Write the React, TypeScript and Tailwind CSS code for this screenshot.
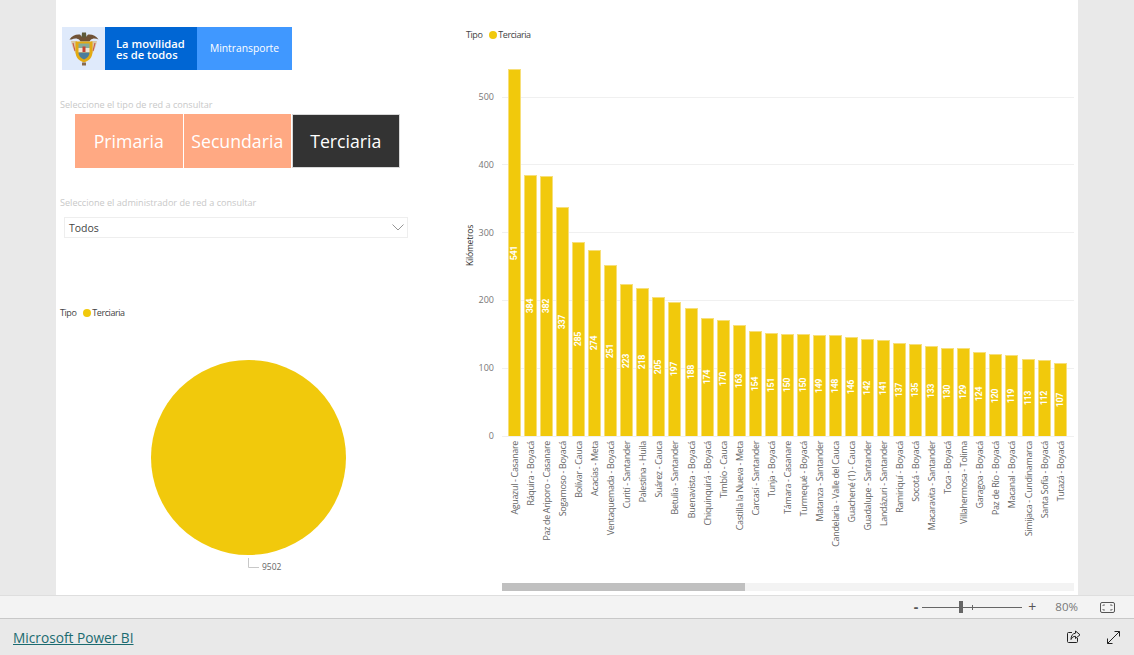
import React from "react";

const data: [string, number][] = [
  ["Aguazul - Casanare", 541],
  ["Ráquira - Boyacá", 384],
  ["Paz de Ariporo - Casanare", 382],
  ["Sogamoso - Boyacá", 337],
  ["Bolívar - Cauca", 285],
  ["Acacías - Meta", 274],
  ["Ventaquemada - Boyacá", 251],
  ["Curití - Santander", 223],
  ["Palestina - Huila", 218],
  ["Suárez - Cauca", 205],
  ["Betulia - Santander", 197],
  ["Buenavista - Boyacá", 188],
  ["Chiquinquirá - Boyacá", 174],
  ["Timbío - Cauca", 170],
  ["Castilla la Nueva - Meta", 163],
  ["Carcasí - Santander", 154],
  ["Tunja - Boyacá", 151],
  ["Támara - Casanare", 150],
  ["Turmequé - Boyacá", 150],
  ["Matanza - Santander", 149],
  ["Candelaria - Valle del Cauca", 148],
  ["Guachené (1) - Cauca", 146],
  ["Guadalupe - Santander", 142],
  ["Landázuri - Santander", 141],
  ["Ramiriquí - Boyacá", 137],
  ["Socotá - Boyacá", 135],
  ["Macaravita - Santander", 133],
  ["Toca - Boyacá", 130],
  ["Villahermosa - Tolima", 129],
  ["Garagoa - Boyacá", 124],
  ["Paz de Río - Boyacá", 120],
  ["Macanal - Boyacá", 119],
  ["Simijaca - Cundinamarca", 113],
  ["Santa Sofía - Boyacá", 112],
  ["Tutazá - Boyacá", 107],
];

const ticks = [500, 400, 300, 200, 100, 0];
const TICK_PX = 0.678;
const BAR_PX = 0.68;

function Escudo() {
  return (
    <svg viewBox="0 0 30 34" className="h-[34px] w-[30px]" aria-hidden="true">
      {/* flags behind the shield */}
      <path d="M2 9c1 4 2 9 5 13l2-2-1-11Z" fill="#d9c7a4" />
      <path d="M28 9c-1 4-2 9-5 13l-2-2 1-11Z" fill="#d9c7a4" />
      <path d="M4 11l2 8M26 11l-2 8" stroke="#c8504a" strokeWidth="1" />
      {/* condor */}
      <path d="M0.500 7.500C3 3.500 7 2 11 2.500l2 2.500h4l2-2.500c4-.5 8 1 10.500 5-3-1.500-6-1.500-8 .5l-1 1.500h-9l-1-1.500c-2-2-5-2-8-.5Z" fill="#6f5236" />
      <path d="M13 .5h4l.5 5h-5Z" fill="#5d5a3a" />
      {/* shield */}
      <path d="M6.500 9.500h17v10c0 6.500-4 9.500-8.500 11-4.500-1.500-8.500-4.500-8.500-11Z" fill="#e3aa12" />
      <path d="M9.500 11.500h11V16h-11Z" fill="#86ab9c" />
      <path d="M9.500 16h11v4.500h-11Z" fill="#ece3d6" />
      <path d="M13.500 14.500h3V20h-3Z" fill="#c8412f" />
      <path d="M9.500 20.500h11c0 3.500-2 5.500-5.500 7-3.500-1.500-5.500-3.500-5.500-7Z" fill="#4c7d9c" />
      <path d="M13 30.500h4V33.500h-4Z" fill="#8a6a4a" />
    </svg>
  );
}

function Legend() {
  return (
    <div className="flex h-[12px] items-center font-['Open_Sans',sans-serif] text-[9px] tracking-[-0.45px] text-[#444]">
      <span>Tipo</span>
      <span className="ml-[7px] h-[8px] w-[8px] rounded-full bg-[#f1c90c]" />
      <span className="ml-px">Terciaria</span>
    </div>
  );
}

function SlicerButton({ label, active }: { label: string; active?: boolean }) {
  return (
    <div
      className={`flex h-[54px] w-[107.5px] items-center justify-center border pt-px text-[17.7px] text-white ${
        active ? "border-[#d8d8d8] bg-[#333333]" : "border-transparent bg-[#ffa983]"
      }`}
    >
      {label}
    </div>
  );
}

function LeftColumn() {
  return (
    <div className="flex w-[410px] shrink-0 flex-col pt-[27px] font-['Open_Sans',sans-serif]">
      <div className="ml-[6px] flex h-[43px] w-[230px]">
        <div className="flex w-[43px] items-center justify-center bg-[#dfeafb]">
          <Escudo />
        </div>
        <div className="flex w-[92px] flex-col justify-center whitespace-nowrap bg-[#0066d4] pl-[11px] text-[11.2px] font-semibold leading-[11px] text-white">
          <span>La movilidad</span>
          <span>es de todos</span>
        </div>
        <div className="flex flex-1 items-center justify-center bg-[#4098ff] text-[10.3px] font-medium text-white">
          Mintransporte
        </div>
      </div>

      <p className="ml-[4px] mt-[28px] h-[14px] text-[9.1px] leading-[14px] text-[#c8c8c8]">
        Seleccione el tipo de red a consultar
      </p>
      <div className="ml-[19px] mt-[2px] flex gap-px">
        <SlicerButton label="Primaria" />
        <SlicerButton label="Secundaria" />
        <SlicerButton label="Terciaria" active />
      </div>

      <p className="ml-[4px] mt-[28px] h-[14px] text-[9.1px] leading-[14px] text-[#c8c8c8]">
        Seleccione el administrador de red a consultar
      </p>
      <div className="ml-[8px] mt-[7px] flex h-[21px] w-[344px] items-center justify-between border border-[#eeeeee] pl-[4px] pr-[3px] text-[10.5px] text-[#444]">
        <span className="pt-[3px]">Todos</span>
        <svg viewBox="0 0 12 7" className="h-[7px] w-[12px]" fill="none" stroke="#8a8a8a" strokeWidth="0.9" aria-hidden="true">
          <path d="M0.5 0.5 6 6l5.5-5.5" />
        </svg>
      </div>

      <div className="ml-[4px] mt-[69px]">
        <Legend />
      </div>

      <div className="relative ml-[95px] mt-[41px] h-[195px] w-[195px] rounded-full bg-[#f1c90c]">
        <svg viewBox="0 0 12 10" className="absolute left-[97px] top-[198px] h-[10px] w-[12px]" fill="none" stroke="#c8c8c8" aria-hidden="true">
          <path d="M0.5 0v9.5H11" />
        </svg>
        <span className="absolute left-[111px] top-[201px] text-[8.5px] leading-[12px] text-[#666]">9502</span>
      </div>
    </div>
  );
}

function BarChart() {
  return (
    <div className="flex min-w-0 flex-1 flex-col pt-[29px]">
      <Legend />
      <div className="mt-[28px] flex">
        <div className="flex h-[367px] w-[8px] items-center justify-center pb-[15px]">
          <span className="rotate-180 whitespace-nowrap font-['Open_Sans',sans-serif] text-[8.500px] tracking-[-0.2px] text-[#333] [writing-mode:vertical-rl]">
            Kilómetros
          </span>
        </div>
        <div className="relative h-[367px] w-[600px]">
          {ticks.map((tick) => (
            <div key={tick} className="absolute left-0 flex w-full items-center" style={{ bottom: tick * TICK_PX - 6 }}>
              <span className="w-[20px] text-right font-['Open_Sans',sans-serif] text-[9px] leading-[12px] text-[#777]">{tick}</span>
              <span className="ml-[8px] h-px flex-1 bg-[#f0f0f0]" />
            </div>
          ))}
          <div className="absolute bottom-0 left-[34px] flex items-end gap-[3.06px]">
            {data.map(([name, value]) => (
              <div
                key={name}
                className="flex w-[13px] items-center justify-center border border-b-0 border-[#f7df7a] bg-[#f1c90c]"
                style={{ height: Math.min(value * BAR_PX, 367) }}
              >
                <span className="rotate-180 font-['Roboto',sans-serif] text-[9px] leading-none font-bold tracking-[-0.4px] text-white [writing-mode:vertical-rl]">
                  {value}
                </span>
              </div>
            ))}
          </div>
        </div>
      </div>
      <div className="ml-[42px] mt-[5px] flex h-[125px] items-start gap-[3.06px]">
        {data.map(([name]) => (
          <div key={name} className="flex w-[13px] shrink-0 justify-center">
            <span className="rotate-180 whitespace-nowrap font-['Open_Sans',sans-serif] text-[9px] leading-[13px] tracking-[-0.35px] text-[#666] [writing-mode:vertical-rl]">
              {name}
            </span>
          </div>
        ))}
      </div>
      <div className="ml-[36px] mt-[17px] h-[8px] w-[572px] bg-[#f3f3f3]">
        <div className="h-full w-[243px] bg-[#c0c0c0]" />
      </div>
    </div>
  );
}

function StatusBar() {
  return (
    <div className="flex h-[24px] items-center justify-end border-y border-b-[#c8c8c8] border-t-[#dedede] bg-[#f3f3f3] font-['Open_Sans',sans-serif]">
      <span className="mr-[4px] text-[14px] leading-none font-bold text-[#555]">-</span>
      <div className="relative h-px w-[100px] bg-[#666]">
        <span className="absolute left-[37px] top-[-6px] h-[12px] w-[4px] bg-[#666]" />
        <span className="absolute left-[50px] top-[-2px] h-[5px] w-px bg-[#666]" />
      </div>
      <span className="ml-[6px] text-[14px] leading-none text-[#555]">+</span>
      <span className="mb-px ml-[19px] text-[11.5px] text-[#777]">80%</span>
      <svg viewBox="0 0 15 11" className="ml-[22px] mr-[19px] h-[11px] w-[15px]" fill="none" stroke="#555" aria-hidden="true">
        <rect x="0.5" y="0.5" width="14" height="10" rx="1.5" />
        <path d="M3 4V3h2M10 3h2v1M12 7v1h-2M5 8H3V7" strokeWidth="0.8" />
      </svg>
    </div>
  );
}

function Footer() {
  return (
    <div className="flex h-[36px] items-center justify-between bg-[#e9e9e9] pl-[13px] pr-[14px]">
      <a className="pt-[3px] font-['Open_Sans',sans-serif] text-[13.700px] font-medium text-[#1b6b70] underline">Microsoft Power BI</a>
      <div className="flex items-center gap-[26px]">
        <svg viewBox="0 0 14 14" className="h-[14px] w-[14px]" fill="none" stroke="#222" strokeWidth="1" aria-hidden="true">
          <path d="M5 2.500H1.500a1 1 0 0 0-1 1v8a1 1 0 0 0 1 1h8a1 1 0 0 0 1-1V8" />
          <path d="M8.500 1 13 4.800 8.500 8.500V6.300C6.300 6.300 5 7.300 4 9.500c0-3.500 1.500-6 4.500-6.300Z" />
        </svg>
        <svg viewBox="0 0 13 13" className="h-[13px] w-[13px]" fill="none" stroke="#222" strokeWidth="1" aria-hidden="true">
          <path d="M.5 12.500 12.500.5M7.500.5h5v5M.5 7.500v5h5" />
        </svg>
      </div>
    </div>
  );
}

export default function App() {
  return (
    <div className="h-[655px] w-[1134px] overflow-hidden bg-[#e9e9e9]">
      <div className="ml-[56px] flex h-[595px] w-[1022px] bg-white">
        <LeftColumn />
        <BarChart />
      </div>
      <StatusBar />
      <Footer />
    </div>
  );
}
